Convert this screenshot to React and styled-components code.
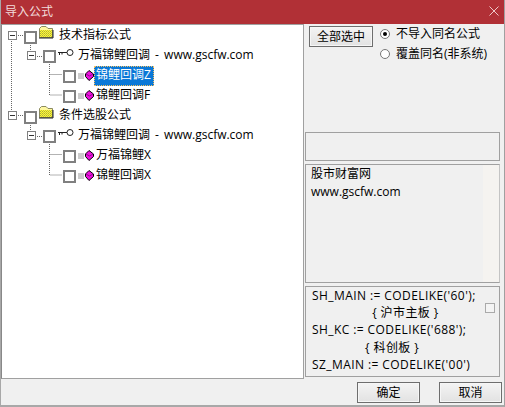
import React from "react";
import styled, { createGlobalStyle } from "styled-components";

const Global = createGlobalStyle`
  html, body { margin: 0; padding: 0; background: #f0f0f0; }
  body { font-family: "Open Sans", "Noto Sans CJK SC", sans-serif; font-size: 12px; color: #000; }
`;
const Dialog = styled.div`
  width: 505px; height: 407px; box-sizing: border-box; display: flex; flex-direction: column;
  background: #f0f0f0; overflow: hidden; border-right: 1px solid #a0a0a0; border-bottom: 2px solid #a8a8a8; border-left: 1px solid #a8a8a8;
`;
const TitleBar = styled.div`
  height: 22px; flex: none; margin: 0 -1px; background: #b13036; color: #f2dcdc; display: flex; align-items: center; justify-content: space-between;
  padding: 0 6px 2px 5px; font-size: 12px;
`;
const Body = styled.div`
  flex: 1; display: flex; min-height: 0; gap: 1px; padding-right: 4px;
`;
const Tree = styled.div`
  position: relative; width: 303px; height: 355px; flex: none; box-sizing: border-box; background: #fff;
  border: 1px solid #a0a0a0; border-left: 1px solid #888; padding-top: 1px;
`;
const Lines = styled.svg`position: absolute; left: 0; top: 0; pointer-events: none;`;
const Row = styled.div`
  position: relative; height: 20px; display: flex; align-items: center; padding-left: ${p => p.$indent}px;
`;
const Expander = styled.span`
  width: 9px; height: 9px; box-sizing: border-box; border: 1px solid #808080; background: #fff; position: relative; margin-right: 7px; flex: none; top: -1px;
  &::after { content: ""; position: absolute; left: 1px; top: 3px; width: 5px; height: 1px; background: #333; }
`;
const Check = styled.span`
  width: 13px; height: 13px; box-sizing: border-box; border: 2px solid #808080; background: #fff; flex: none; position: relative; top: ${p => p.$top || 0}px;
`;
const Label = styled.span`
  height: 20px; box-sizing: border-box; padding: 0 2px; white-space: nowrap; line-height: 17px; word-spacing: 2px;
`;
const Selected = styled(Label)`
  background: #0a78d7; color: #fff; outline: 1px dotted #f5c060; outline-offset: -1px; padding: 0 3px 0 2px;
`;
const Side = styled.div`
  flex: 1; min-width: 0; display: flex; flex-direction: column;
`;
const Top = styled.div`
  height: 108px; flex: none; display: flex; padding: 2px 0 0 4px; gap: 7px; box-sizing: border-box;
`;
const Button = styled.button`
  font: inherit; padding: 0; color: #000; width: ${p => p.$w}px; height: ${p => p.$h}px; flex: none; line-height: 16px;
  background: linear-gradient(#f4f4f4, #e2e2e2); border: 1px solid #6e6e6e; box-shadow: inset 0 0 0 1px #f6f6f6;
`;
const Radios = styled.div`display: flex; flex-direction: column; gap: 3px; margin-top: -1px;`;
const RadioRow = styled.div`display: flex; align-items: center; gap: 6px; height: 17px; white-space: nowrap; line-height: 16px;`;
const Radio = styled.span`
  width: 10px; height: 10px; border-radius: 50%; box-sizing: border-box; border: 1px solid #777; background: #fff; display: flex; align-items: center; justify-content: center; flex: none;
  &::after { content: ""; width: 4px; height: 4px; border-radius: 50%; background: ${p => p.$on ? "#000" : "transparent"}; }
`;
const Empty = styled.div`
  height: 29px; flex: none; box-sizing: border-box; border: 1px solid #a0a0a0; margin-bottom: 3px;
`;
const Note = styled.div`
  height: 119px; flex: none; box-sizing: border-box; border: 1px solid #a0a0a0; padding: 0 5px; line-height: 18px; margin-bottom: 3px;
  border-right-color: #c4c4c4; background: linear-gradient(90deg, #f0f0f0 0 177px, #f5f3f0 177px);
`;
const Code = styled.div`
  position: relative; flex: 1; box-sizing: border-box; border: 1px solid #a0a0a0; padding: 0 5px 0 6px; line-height: 17.2px; white-space: pre; letter-spacing: 0.42px;
`;
const CodeBox = styled.span`
  position: absolute; right: 4px; top: 16px; width: 10px; height: 10px; box-sizing: border-box; border: 1px solid #aaa; background: #f4f4f4;
`;
const Footer = styled.div`
  height: 28px; flex: none; display: flex; justify-content: flex-end; gap: 19px; padding: 5px 2px 0 0; box-sizing: border-box;
`;

const Folder = () => (
  <svg width="16" height="14" viewBox="0 0 16 14" style={{ flex: "none", margin: "-9px 3px 0 1px" }}>
    <defs>
      <pattern id="dither" width="2" height="2" patternUnits="userSpaceOnUse">
        <rect width="2" height="2" fill="#ffff30" />
        <rect width="1" height="1" fill="#b0a840" />
        <rect x="1" y="1" width="1" height="1" fill="#c8c040" />
      </pattern>
    </defs>
    <path d="M1.5 12.5V3.5L3.5 1.5H8L10 3.5H14.5V12.5Z" fill="#fff8a0" stroke="#8a8a60" />
    <rect x="2" y="5" width="12" height="7" fill="url(#dither)" />
    <path d="M1 13H15V5" stroke="#222" fill="none" />
  </svg>
);
const Key = () => (
  <svg width="16" height="8" viewBox="0 0 16 8" style={{ flex: "none", margin: "-7px 2px 0 2px" }}>
    <path d="M0 3.5H9M1.5 3.5V6M4 3.5V5.5" stroke="#222" fill="none" />
    <circle cx="12" cy="3.5" r="3" fill="#fff" stroke="#222" />
  </svg>
);
const Leaf = () => (
  <svg width="17" height="11" viewBox="0 0 17 11" style={{ flex: "none", margin: "-1px -1px 0 2px" }}>
    <path d="M0 4H6M0 6H6M0 8H6" stroke="#999" />
    <path d="M11 0.5L15.5 4V6.5L11 10.5L7.5 6.5V4Z" fill="#ee10e0" stroke="#000" />
    <path d="M8 4L11.5 6L15 4" stroke="#90108a" fill="none" />
  </svg>
);

const Group = ({ title, sub, items }) => (
  <>
    <Row $indent={6}>
      <Expander />
      <Check $top={1} />
      <Folder />
      <Label>{title}</Label>
    </Row>
    <Row $indent={25}>
      <Expander />
      <Check $top={0} />
      <Key />
      <Label>{sub}</Label>
    </Row>
    {items.map(i => (
      <Row key={i.t} $indent={61}>
        <Check $top={0} />
        <Leaf />
        {i.s ? <Selected>{i.t}</Selected> : <Label>{i.t}</Label>}
      </Row>
    ))}
  </>
);

export default function App() {
  return (
    <>
      <Global />
      <Dialog>
        <TitleBar>
          <span>导入公式</span>
          <svg width="10" height="10" viewBox="0 0 10 10"><path d="M0.5 0.5L9.5 9.5M9.5 0.5L0.5 9.5" stroke="#eec8c8" /></svg>
        </TitleBar>
        <Body>
          <Tree>
            <Lines width="110" height="170" viewBox="0 0 110 170">
              <path d="M9.5 14V88M28.5 20V27M47.5 39V70H60M47.5 49.5H60M14 10.5H22M33 31.5H41M28.5 100V107M47.5 119V150H60M47.5 129.5H60M14 90.5H22M33 111.5H41" stroke="#666" strokeDasharray="1 1" fill="none" />
            </Lines>
            <Group title="技术指标公式" sub="万福锦鲤回调 - www.gscfw.com" items={[{ t: "锦鲤回调Z", s: true }, { t: "锦鲤回调F" }]} />
            <Group title="条件选股公式" sub="万福锦鲤回调 - www.gscfw.com" items={[{ t: "万福锦鲤X" }, { t: "锦鲤回调X" }]} />
          </Tree>
          <Side>
            <Top>
              <Button $w={64} $h={21}>全部选中</Button>
              <Radios>
                <RadioRow><Radio $on />不导入同名公式</RadioRow>
                <RadioRow><Radio />覆盖同名(非系统)</RadioRow>
              </Radios>
            </Top>
            <Empty />
            <Note>股市财富网<br />www.gscfw.com</Note>
            <Code>
              {"SH_MAIN := CODELIKE('60');\n                 { 沪市主板 }\nSH_KC := CODELIKE('688');\n               { 科创板 }\nSZ_MAIN := CODELIKE('00')"}
              <CodeBox />
            </Code>
          </Side>
        </Body>
        <Footer>
          <Button $w={63} $h={21}>确定</Button>
          <Button $w={63} $h={21}>取消</Button>
        </Footer>
      </Dialog>
    </>
  );
}
